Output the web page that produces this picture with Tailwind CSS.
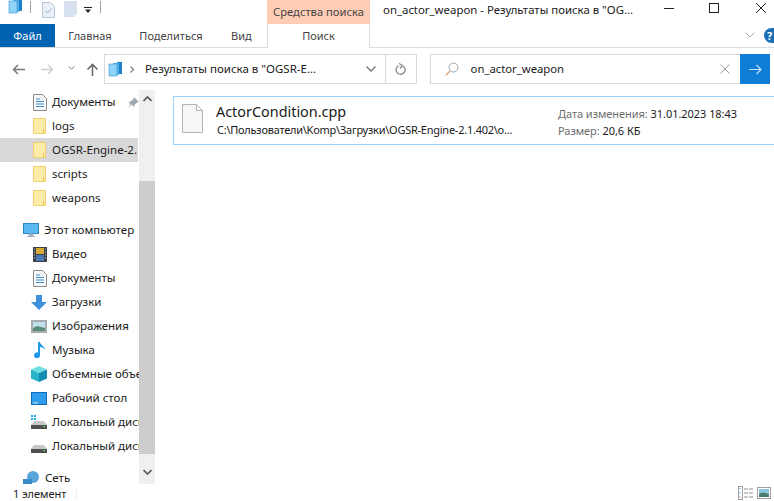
<!DOCTYPE html>
<html lang="ru">
<head>
    <meta charset="UTF-8">
    <title>on_actor_weapon - Результаты поиска</title>
    <script src="https://cdn.jsdelivr.net/npm/@tailwindcss/browser@4"></script>
</head>
<body class="bg-white w-[774px] h-[501px] overflow-hidden font-['Noto_Sans',sans-serif] text-[11.5px] text-[#1a1a1a] leading-none [&_svg]:shrink-0">
    <!-- Title bar -->
    <div class="h-[24px] flex items-start">
        <div class="w-[267px] h-[18px] flex items-start pl-[8px]">
            <svg width="15" height="15" viewBox="0 0 15 15" class="-mt-[1px]"><rect x="9" y="0" width="5" height="12" fill="#1f7fc9"/><rect x="5" y="1" width="6" height="12" fill="#4fb0ea"/><rect x="1" y="2" width="8" height="12" fill="#8fd3f7" stroke="#3b9ade" stroke-width="0.6"/></svg>
            <div class="w-px h-[12px] bg-[#a0a0a0] ml-[7px] mt-[1px]"></div>
            <svg width="13" height="16" viewBox="0 0 13 16" class="ml-[11px] mt-[2px]"><path d="M.5.500h8l4 4v11H.5z" fill="#eaf0f8" stroke="#b5c3d6"/><path d="M3.500 8.500l2 2.500 4-4.500" fill="none" stroke="#9ab0c8"/></svg>
            <svg width="13" height="16" viewBox="0 0 13 16" class="ml-[9px] mt-[1px]"><path d="M0 0h13v13l-3 3H0z" fill="#d6e0ee"/><path d="M10 16v-3h3z" fill="#eef2f7"/></svg>
            <svg width="8" height="6" viewBox="0 0 8 6" class="ml-[7px] mt-[7px]"><path d="M0 .5h8" stroke="#222"/><path d="M1 2.500h6l-3 3.500z" fill="#222"/></svg>
            <div class="w-px h-[12px] bg-[#a0a0a0] ml-[8px] mt-[1px]"></div>
        </div>
        <div class="w-[103px] h-[24px] bg-[#ffcdb5] text-center pt-[6px] text-[#444] text-[11.2px]">Средства поиска</div>
        <div class="pl-[13px] pt-[4px] text-[11.4px]">on_actor_weapon - Результаты поиска в "OG...</div>
        <div class="ml-auto flex items-start h-[16px]">
            <svg width="46" height="16" viewBox="0 0 46 16"><path d="M12 8.500h10" stroke="#222"/></svg>
            <svg width="46" height="16" viewBox="0 0 46 16"><rect x="11.500" y="3.500" width="9" height="9" fill="none" stroke="#222"/></svg>
            <svg width="30" height="16" viewBox="0 0 30 16"><path d="M12 3l10 10M22 3L12 13" stroke="#222"/></svg>
        </div>
    </div>
    <!-- Ribbon tabs -->
    <div class="h-[24px] flex border-b border-[#dcdcdc] text-[11px]">
        <div class="w-[55px] bg-[#0063b1] text-white text-center pt-[6px]">Файл</div>
        <div class="w-[70px] text-center pt-[6px] text-[#444]">Главная</div>
        <div class="w-[92px] text-center pt-[6px] text-[#444]">Поделиться</div>
        <div class="w-[50px] pl-[14px] pt-[6px] text-[#444]">Вид</div>
        <div class="w-[103px] text-center pt-[6px] text-[#444] border-x border-[#dcdcdc] -mb-px bg-white">Поиск</div>
        <div class="ml-auto flex items-center pb-[1px]">
            <svg width="10" height="6" viewBox="0 0 10 6" class="mr-[9px]"><path d="M.5.500l4.500 4.500 4.500-4.500" fill="none" stroke="#a8a8a8"/></svg>
            <div class="w-[10px] h-[15px] bg-[#1a6fb5] rounded-l-full text-white font-bold pl-[3px] pt-[2px]">?</div>
        </div>
    </div>
    <!-- Address bar -->
    <div class="h-[42px] flex items-center pl-[12px] pr-[4px]">
        <svg width="13" height="11" viewBox="0 0 13 11"><path d="M13 5.500H2M6 1L1.500 5.500 6 10" fill="none" stroke="#7a7a7a" stroke-width="1.500"/></svg>
        <svg width="13" height="11" viewBox="0 0 13 11" class="ml-[16px]"><path d="M0 5.500h11M7 1l4.500 4.500L7 10" fill="none" stroke="#d0d0d0" stroke-width="1.500"/></svg>
        <svg width="7" height="4" viewBox="0 0 7 4" class="ml-[14px] -mt-[2px]"><path d="M.5.500l3 2.500 3-2.500" fill="none" stroke="#808080"/></svg>
        <svg width="13" height="13" viewBox="0 0 13 13" class="ml-[11px]"><path d="M6.500 13V2M1.500 6.500l5-5 5 5" fill="none" stroke="#6a6a6a" stroke-width="1.600"/></svg>
        <div class="w-[283px] h-[30px] border border-[#d9d9d9] flex items-center ml-[5px]">
            <svg width="15" height="15" viewBox="0 0 15 15" class="ml-[3px]"><rect x="9" y="0" width="5" height="12" fill="#1f7fc9"/><rect x="5" y="1" width="6" height="12" fill="#4fb0ea"/><rect x="1" y="2" width="8" height="12" fill="#8fd3f7" stroke="#3b9ade" stroke-width="0.6"/></svg>
            <svg width="5" height="7" viewBox="0 0 5 7" class="ml-[7px]"><path d="M.5.500l3 3-3 3" fill="none" stroke="#808080" stroke-width="1.200"/></svg>
            <span class="ml-[10px]">Результаты поиска в "OGSR-E...</span>
            <svg width="10" height="6" viewBox="0 0 10 6" class="ml-auto mr-[9px]"><path d="M.5.500l4.500 4.500 4.500-4.500" fill="none" stroke="#707070" stroke-width="1.300"/></svg>
        </div>
        <div class="w-[31px] h-[30px] border border-l-0 border-[#d9d9d9] flex items-center justify-center">
            <svg width="12" height="13" viewBox="0 0 12 13"><path d="M7 2.500a4.500 4.500 0 1 1-3.500.3M7.500 2.500L4 .5M7.500 2.500L5 5.500" fill="none" stroke="#8a8a8a" stroke-width="1.300"/></svg>
        </div>
        <div class="w-[342px] h-[30px] border border-[#d9d9d9] flex items-center ml-[13px]">
            <svg width="14" height="14" viewBox="0 0 14 14" class="ml-[14px]"><circle cx="8.500" cy="5.500" r="4.500" fill="none" stroke="#9aa4ae"/><path d="M5 9l-4 4" stroke="#d8a070" stroke-width="1.300"/></svg>
            <span class="ml-[12px] text-[11.3px]">on_actor_weapon</span>
            <svg width="10" height="10" viewBox="0 0 10 10" class="ml-auto mr-[10px]"><path d="M.5.500l9 9M9.500.500l-9 9" stroke="#9a9a9a"/></svg>
            <div class="w-[30px] h-[30px] -my-px -mr-px bg-[#0f7dd6] flex items-center justify-center">
                <svg width="13" height="11" viewBox="0 0 13 11"><path d="M0 5.500h12M7.500 1L12 5.500 7.500 10" fill="none" stroke="#bfe0f7" stroke-width="1.200"/></svg>
            </div>
        </div>
    </div>
    <!-- Main -->
    <div class="h-[394px] flex">
        <!-- Navigation pane -->
        <div class="w-[139px] h-[394px] overflow-hidden shrink-0 whitespace-nowrap">
            <div class="h-[24px] flex items-center pl-[33px]">
                <svg width="14" height="17" viewBox="0 0 14 17"><path d="M.5.500h9l4 4v12H.5z" fill="#f8f8f8" stroke="#8a8a8a"/><path d="M3 5h4M3 7.500h8M3 10h8M3 12.500h8" stroke="#3f8fd0"/></svg>
                <span class="ml-[5px]">Документы</span>
                <svg width="11" height="11" viewBox="0 0 11 11" class="ml-[13px]"><path d="M6 0l5 5-2 .5-2.500 2.500-.5 2L3.500 7.500 0 11l2.500-4L.500 5 2.500 4.500 5.500 2z" fill="#a0a8b0"/></svg>
            </div>
            <div class="h-[24px] flex items-center pl-[33px]">
                <svg width="13" height="16" viewBox="0 0 13 16"><path d="M.5.500h12v15H.5z" fill="#fdeba8" stroke="#f2cf6a"/><path d="M10.500 11v4.500" stroke="#e8bf55"/></svg>
                <span class="ml-[6px]">logs</span>
            </div>
            <div class="h-[24px] flex items-center pl-[33px] mr-px overflow-hidden bg-[#d9d9d9]">
                <svg width="13" height="16" viewBox="0 0 13 16"><path d="M.5.500h12v15H.5z" fill="#fdeba8" stroke="#f2cf6a"/><path d="M10.500 11v4.500" stroke="#e8bf55"/></svg>
                <span class="ml-[6px]">OGSR-Engine-2.1.402</span>
            </div>
            <div class="h-[24px] flex items-center pl-[33px]">
                <svg width="13" height="16" viewBox="0 0 13 16"><path d="M.5.500h12v15H.5z" fill="#fdeba8" stroke="#f2cf6a"/><path d="M10.500 11v4.500" stroke="#e8bf55"/></svg>
                <span class="ml-[6px]">scripts</span>
            </div>
            <div class="h-[24px] flex items-center pl-[33px]">
                <svg width="13" height="16" viewBox="0 0 13 16"><path d="M.5.500h12v15H.5z" fill="#fdeba8" stroke="#f2cf6a"/><path d="M10.500 11v4.500" stroke="#e8bf55"/></svg>
                <span class="ml-[6px]">weapons</span>
            </div>
            <div class="h-[24px] flex items-center pl-[23px] mt-[8px]">
                <svg width="16" height="14" viewBox="0 0 16 14"><rect x=".5" y=".5" width="15" height="10" fill="#5cb8f0" stroke="#2a86c8"/><path d="M4 13.500h8M6 11h4v2H6z" fill="#9fb4c4" stroke="#9fb4c4"/></svg>
                <span class="ml-[5px]">Этот компьютер</span>
            </div>
            <div class="h-[24px] flex items-center pl-[33px]">
                <svg width="14" height="15" viewBox="0 0 14 15"><rect width="14" height="15" fill="#3a3f4a"/><rect x="3" y="1" width="8" height="6" fill="#d8a838"/><rect x="3" y="8" width="8" height="6" fill="#4a78b8"/><path d="M1 2h1M1 5h1M1 8h1M1 11h1M12 2h1M12 5h1M12 8h1M12 11h1" stroke="#c8c8c8"/></svg>
                <span class="ml-[5px]">Видео</span>
            </div>
            <div class="h-[24px] flex items-center pl-[33px]">
                <svg width="14" height="17" viewBox="0 0 14 17"><path d="M.5.500h9l4 4v12H.5z" fill="#f8f8f8" stroke="#8a8a8a"/><path d="M3 5h4M3 7.500h8M3 10h8M3 12.500h8" stroke="#3f8fd0"/></svg>
                <span class="ml-[5px]">Документы</span>
            </div>
            <div class="h-[24px] flex items-center pl-[31px]">
                <svg width="16" height="15" viewBox="0 0 16 15"><path d="M5 0h6v7h5l-8 8-8-8h5z" fill="#3f8fdc"/></svg>
                <span class="ml-[5px]">Загрузки</span>
            </div>
            <div class="h-[24px] flex items-center pl-[31px]">
                <svg width="16" height="13" viewBox="0 0 16 13"><rect width="16" height="13" fill="#a8acb0"/><rect x="2" y="2" width="12" height="9" fill="#bfe0ec"/><path d="M2 8l4-2 8 2v3H2z" fill="#5a8a78"/></svg>
                <span class="ml-[5px]">Изображения</span>
            </div>
            <div class="h-[24px] flex items-center pl-[33px]">
                <svg width="14" height="16" viewBox="0 0 14 16"><path d="M5 0h2c0 3 5 4 5 8-1-2-3-3-5-3v8a3 3 0 1 1-2-2.500z" fill="#1e9be8"/></svg>
                <span class="ml-[5px]">Музыка</span>
            </div>
            <div class="h-[24px] flex items-center pl-[31px]">
                <svg width="16" height="16" viewBox="0 0 16 16"><path d="M8 0l8 3.500-8 3.500-8-3.500z" fill="#6fe0e0"/><path d="M0 3.500l8 3.500v9l-8-3.500z" fill="#2ab4cc"/><path d="M16 3.500L8 7v9l8-3.500z" fill="#128cb0"/></svg>
                <span class="ml-[5px]">Объемные объекты</span>
            </div>
            <div class="h-[24px] flex items-center pl-[31px]">
                <svg width="16" height="13" viewBox="0 0 16 13"><rect x=".5" y=".5" width="15" height="12" fill="#2f9cec" stroke="#0f6cb8"/><path d="M2 11h5" stroke="#d0e8f8"/></svg>
                <span class="ml-[5px]">Рабочий стол</span>
            </div>
            <div class="h-[24px] flex items-center pl-[31px]">
                <svg width="16" height="14" viewBox="0 0 16 14"><path d="M0 0h2v2H0zM3 0h2v2H3zM0 3h2v2H0zM3 3h2v2H3z" fill="#1ea7ee"/><path d="M3 6h10l3 4H0z" fill="#c8c8c8"/><rect y="10" width="16" height="4" fill="#505050"/><rect x="12" y="11" width="2" height="1" fill="#50e050"/></svg>
                <span class="ml-[5px]">Локальный диск (C:)</span>
            </div>
            <div class="h-[24px] flex items-center pl-[31px]">
                <svg width="16" height="14" viewBox="0 0 16 14"><path d="M3 6h10l3 4H0z" fill="#c8c8c8"/><rect y="10" width="16" height="4" fill="#505050"/><rect x="12" y="11" width="2" height="1" fill="#50e050"/></svg>
                <span class="ml-[5px]">Локальный диск (D:)</span>
            </div>
            <div class="h-[24px] flex items-center pl-[23px] mt-[8px]">
                <svg width="17" height="14" viewBox="0 0 17 14"><circle cx="10" cy="6" r="6" fill="#5aa6dc"/><rect y="8" width="9" height="6" fill="#3a8cc8"/></svg>
                <span class="ml-[5px]">Сеть</span>
            </div>
        </div>
        <!-- Scrollbar -->
        <div class="w-[16px] h-[394px] bg-[#f0f0f0] flex flex-col items-center shrink-0">
            <svg width="9" height="6" viewBox="0 0 9 6" class="mt-[6px]"><path d="M.5 5l4-4 4 4" fill="none" stroke="#555" stroke-width="1.600"/></svg>
            <div class="w-full h-[273px] bg-[#cdcdcd] mt-[79px]"></div>
            <svg width="9" height="6" viewBox="0 0 9 6" class="mt-[15px]"><path d="M.5 1l4 4 4-4" fill="none" stroke="#555" stroke-width="1.600"/></svg>
        </div>
        <!-- Results -->
        <div class="flex-1 pl-[18px] pt-[6px]">
            <div class="h-[49px] border border-r-0 border-[#99d1ff] flex items-start">
                <svg width="21" height="29" viewBox="0 0 21 29" class="ml-[8px] mt-[7px]"><path d="M.5.500h14l6 6v22H.5z" fill="#f6f6f6" stroke="#b4b4b4"/><path d="M14.500.500v6h6z" fill="#fff" stroke="#b4b4b4"/></svg>
                <div class="w-[342px] ml-[13px] pt-[6px]">
                    <div class="text-[14.4px] leading-[18px]">ActorCondition.cpp</div>
                    <div class="mt-[3px] ml-px text-[11px] tracking-[-0.25px]">C:\Пользователи\Komp\Загрузки\OGSR-Engine-2.1.402\o...</div>
                </div>
                <div class="pt-[11px] text-[11px] tracking-[-0.05px]">
                    <div><span class="text-[#6d6d6d]">Дата изменения:</span> 31.01.2023 18:43</div>
                    <div class="mt-[6px]"><span class="text-[#6d6d6d]">Размер:</span> 20,6 КБ</div>
                </div>
            </div>
        </div>
    </div>
    <!-- Status bar -->
    <div class="h-[17px] flex items-center pl-[13px] pt-[1px] text-[11px]">
        <span class="pr-[10px] border-r border-[#eeeeee]">1 элемент</span>
        <div class="ml-auto mr-[3px] flex items-center gap-[3px]">
            <svg width="16" height="14" viewBox="0 0 16 14"><rect x=".5" y=".5" width="4" height="13" fill="#fff" stroke="#a0a0a0"/><path d="M6 3h4M11 3h4M6 7h4M11 7h4M6 11h4M11 11h4" stroke="#909090"/><path d="M2 2v1M2 6.500v1" stroke="#3a8cc8"/><path d="M2 10.500v1" stroke="#c04030"/></svg>
            <svg width="14" height="14" viewBox="0 0 14 14"><rect x=".5" y="1.500" width="13" height="11" fill="#fff" stroke="#a0a0a0"/><rect x="2" y="3" width="10" height="8" fill="#8cc4e0"/><path d="M2 8l4-1.500 6 1.500v3H2z" fill="#4a7a68"/></svg>
        </div>
    </div>
</body>
</html>
